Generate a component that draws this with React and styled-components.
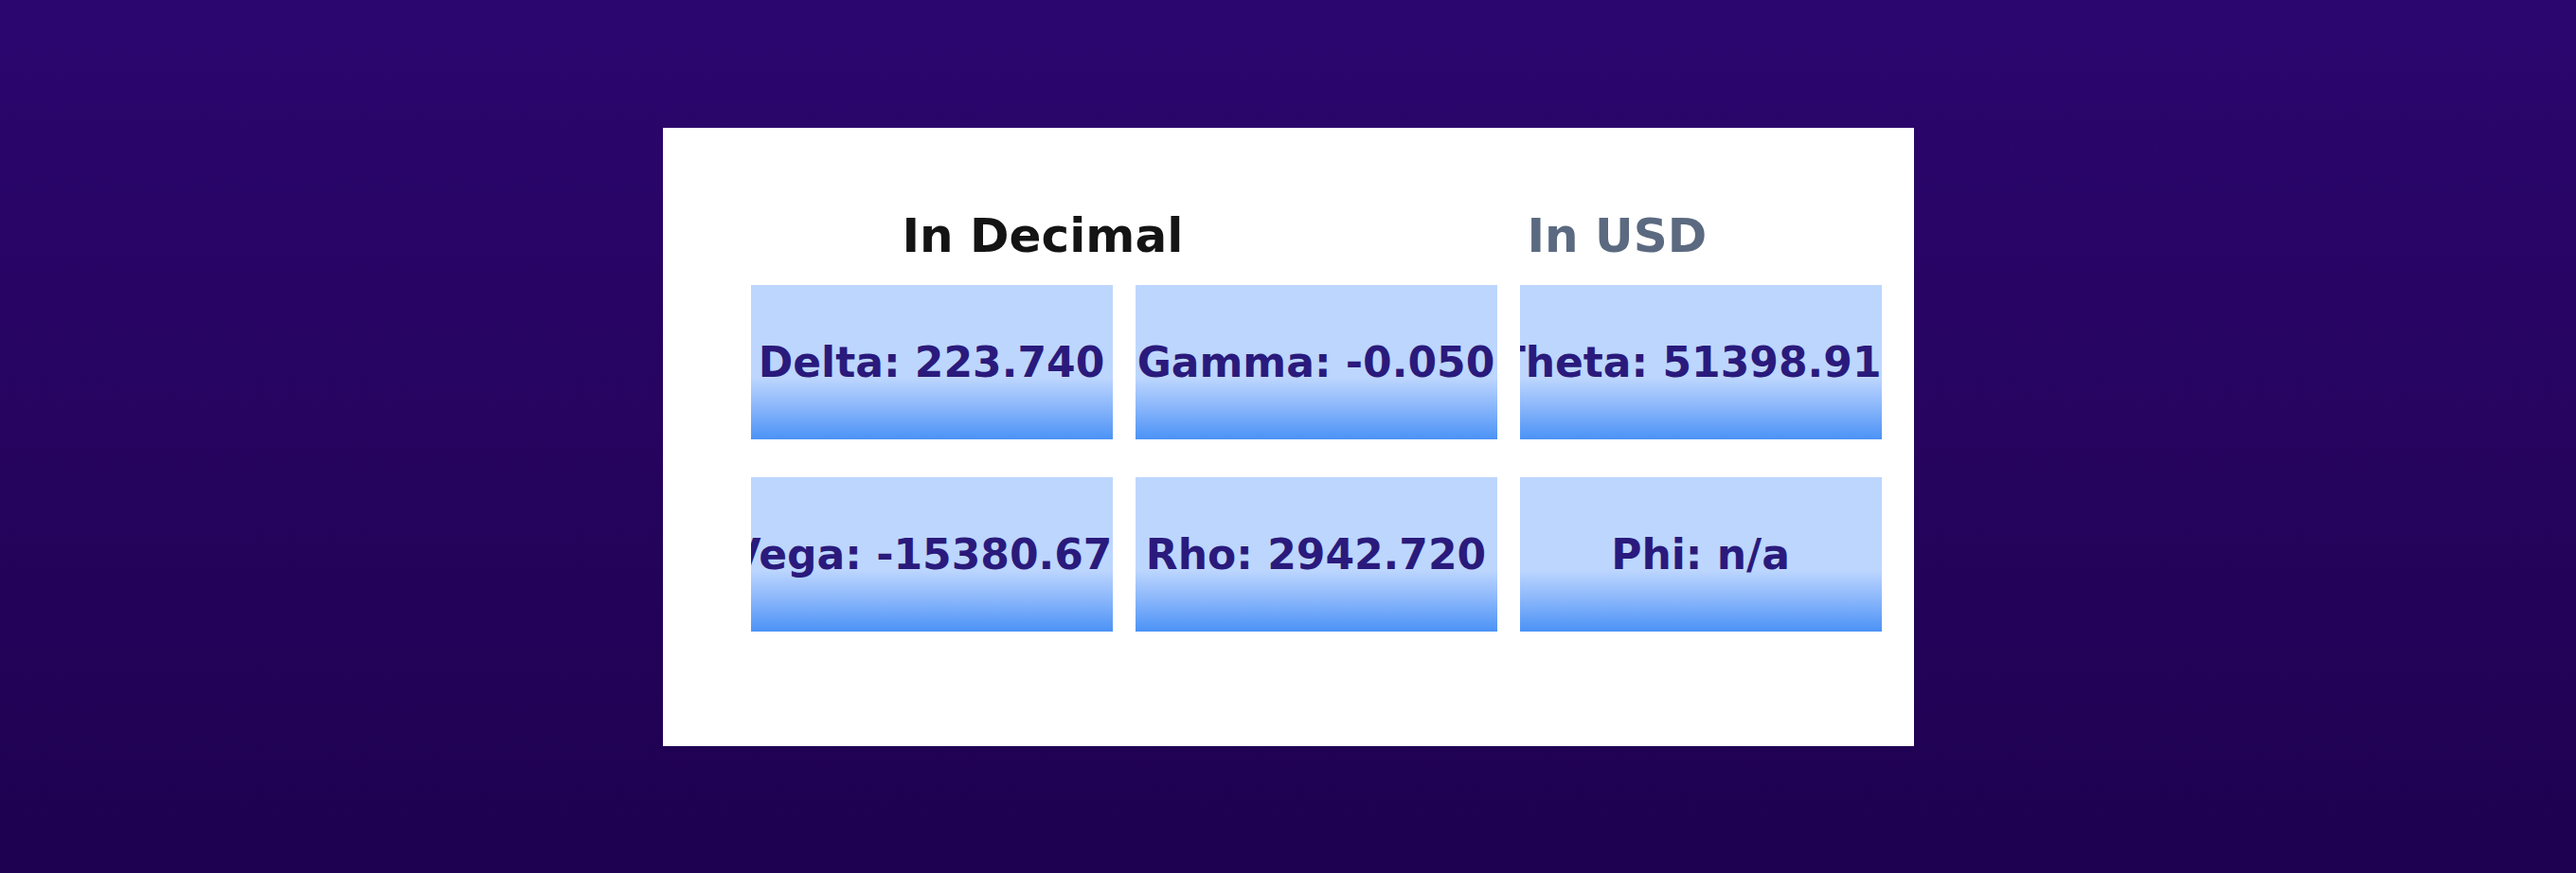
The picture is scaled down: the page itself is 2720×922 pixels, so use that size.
import React from "react";
import styled, { createGlobalStyle } from "styled-components";

const greeks = [
    { name: "Delta", value: "223.740" },
    { name: "Gamma", value: "-0.050" },
    { name: "Theta", value: "51398.91" },
    { name: "Vega", value: "-15380.67" },
    { name: "Rho", value: "2942.720" },
    { name: "Phi", value: "n/a" },
];

export default function App() {
    return (
        <>
            <GlobalStyle />
            <Page>
                <Panel>
                    <Header>
                        <Heading $span={2} $indent={160}>
                            In Decimal
                        </Heading>
                        <Heading $muted $indent={8}>
                            In USD
                        </Heading>
                    </Header>
                    <Grid>
                        {greeks.map((g) => (
                            <Cell key={g.name}>
                                <Value>
                                    {g.name}: {g.value}
                                </Value>
                            </Cell>
                        ))}
                    </Grid>
                </Panel>
            </Page>
        </>
    );
}

const GlobalStyle = createGlobalStyle`
    html, body {
        margin: 0;
        padding: 0;
    }
    body {
        font-family: "DejaVu Sans", Verdana, sans-serif;
    }
`;

const Page = styled.div`
    min-height: 100vh;
    display: flex;
    justify-content: center;
    align-items: center;
    background: linear-gradient(to bottom, #2b066f 0%, #26045f 50%, #1e0150 100%);
`;

const Panel = styled.div`
    background-color: #ffffff;
    width: 1321px;
    height: 653px;
    box-sizing: border-box;
    padding: 85px 34px 0 93px;
    display: flex;
    flex-direction: column;
    gap: 23px;
`;

const Header = styled.div`
    display: grid;
    grid-template-columns: repeat(3, 382px);
    column-gap: 24px;
`;

const Heading = styled.h2`
    margin: 0;
    grid-column: span ${(p) => p.$span || 1};
    padding-left: ${(p) => p.$indent || 0}px;
    font-size: 50px;
    font-weight: bold;
    line-height: 58px;
    color: ${(p) => (p.$muted ? "#5b6a80" : "#141414")};
`;

const Grid = styled.div`
    display: grid;
    grid-template-columns: repeat(3, 382px);
    grid-auto-rows: 163px;
    column-gap: 24px;
    row-gap: 40px;
`;

// centered when it fits, pinned right (clipped on the left) when it doesn't
const Cell = styled.div`
    display: flex;
    justify-content: flex-end;
    align-items: center;
    overflow: hidden;
    background: linear-gradient(
        to bottom,
        #bdd6fe 0%,
        #bdd6fe 60%,
        #8db8fb 78%,
        #4b92f6 100%
    );
`;

const Value = styled.span`
    flex-shrink: 0;
    margin: 0 auto;
    white-space: nowrap;
    font-size: 44px;
    font-weight: bold;
    color: #2a1a7c;
`;
